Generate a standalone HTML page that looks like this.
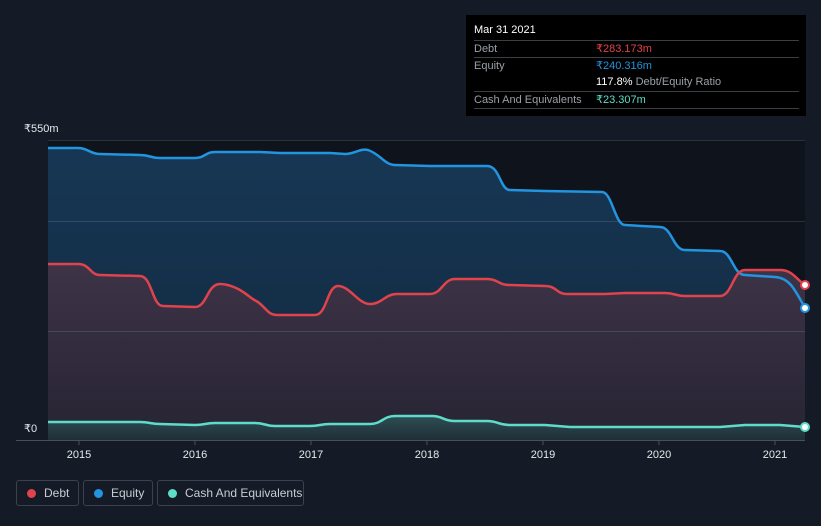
<!DOCTYPE html>
<html style="overflow:hidden"><head><meta charset="utf-8"><style>
body{margin:0;width:821px;height:526px;background:#151b26;font-family:"Liberation Sans",sans-serif;overflow:hidden;position:relative}
.tt{position:absolute;left:466px;top:15px;width:340px;height:101px;background:#000;color:#fff;font-size:11px}
.tt .r{position:absolute;left:8px;width:325px;border-top:1px solid #3a3f47;height:17px;line-height:17px;color:#9aa0a8}
.leg{position:absolute;top:480px;height:26px;border:1px solid #3c424c;border-radius:3px;color:#c8ccd2;font-size:12px;line-height:24px;box-sizing:border-box;white-space:nowrap;overflow:hidden}
.dot{display:inline-block;width:9px;height:9px;border-radius:50%;margin:0 8px 0 10px;vertical-align:-1px}
</style></head><body>
<svg width="821" height="526" style="position:absolute;left:0;top:0">
<defs>
<linearGradient id="ge" x1="0" y1="0" x2="0" y2="1"><stop offset="0" stop-color="#163754"/><stop offset="1" stop-color="#13283d"/></linearGradient>
<linearGradient id="gd" x1="0" y1="0" x2="0" y2="1"><stop offset="0" stop-color="#3e3347"/><stop offset="1" stop-color="#262433"/></linearGradient>
<linearGradient id="gc" x1="0" y1="0" x2="0" y2="1"><stop offset="0" stop-color="#2e4e55"/><stop offset="1" stop-color="#1f2e36"/></linearGradient>
</defs>
<rect x="48" y="140" width="757" height="300" fill="#0f141c"/>
<path d="M48,148 L78,148 C88,148 90,154 100,154 L140,155 C150,155 150,158 160,158 L195,158 C205,158 205,152 215,152 L260,152 L280,153 L330,153 L345,154 C355,154 360,148 368,150 C380,154 385,165 395,165 L430,166 L487,166 C500,166 500,190 510,190 L545,191 L602,192 C612,192 615,225 625,225 L660,227 C672,227 673,250 685,250 L720,251 C732,251 733,275 745,275 L775,277 C790,278 795,290 805,308 L805,440 L48,440Z" fill="url(#ge)"/>
<path d="M48,264 L78,264 C90,264 90,275 100,275 L140,276 C152,276 152,306 163,306 L195,307 C207,307 207,284 220,284 C230,284 240,290 240,290 C250,296 250,298 258,302 C268,310 268,315 278,315 L315,315 C327,315 327,286 338,286 C350,286 358,304 370,304 C382,304 385,294 397,294 L430,294 C442,294 443,279 455,279 L487,279 C498,279 498,285 510,285 L545,286 C557,286 556,294 567,294 L605,294 L625,293 L665,293 C675,293 675,296 685,296 L720,296 C732,296 733,270 745,270 L780,270 C792,270 795,278 805,285 L805,440 L48,440Z" fill="url(#gd)"/>
<path d="M48,422 L140,422 C150,422 150,424 160,424 L195,425 C205,425 205,423 215,423 L255,423 C265,423 265,426 275,426 L310,426 C320,426 320,424 330,424 L370,424 C382,424 383,416 395,416 L432,416 C443,416 443,421 455,421 L487,421 C498,421 498,425 510,425 L545,425 L570,427 L720,427 L745,425 L780,425 L805,427 L805,440 L48,440Z" fill="url(#gc)"/>
<line x1="48" y1="140.5" x2="805" y2="140.5" stroke="#ffffff" stroke-opacity="0.12"/>
<line x1="48" y1="221.5" x2="805" y2="221.5" stroke="#ffffff" stroke-opacity="0.12"/>
<line x1="48" y1="331.5" x2="805" y2="331.5" stroke="#ffffff" stroke-opacity="0.12"/>
<path d="M48,148 L78,148 C88,148 90,154 100,154 L140,155 C150,155 150,158 160,158 L195,158 C205,158 205,152 215,152 L260,152 L280,153 L330,153 L345,154 C355,154 360,148 368,150 C380,154 385,165 395,165 L430,166 L487,166 C500,166 500,190 510,190 L545,191 L602,192 C612,192 615,225 625,225 L660,227 C672,227 673,250 685,250 L720,251 C732,251 733,275 745,275 L775,277 C790,278 795,290 805,308" fill="none" stroke="#2394df" stroke-width="2.5"/>
<path d="M48,264 L78,264 C90,264 90,275 100,275 L140,276 C152,276 152,306 163,306 L195,307 C207,307 207,284 220,284 C230,284 240,290 240,290 C250,296 250,298 258,302 C268,310 268,315 278,315 L315,315 C327,315 327,286 338,286 C350,286 358,304 370,304 C382,304 385,294 397,294 L430,294 C442,294 443,279 455,279 L487,279 C498,279 498,285 510,285 L545,286 C557,286 556,294 567,294 L605,294 L625,293 L665,293 C675,293 675,296 685,296 L720,296 C732,296 733,270 745,270 L780,270 C792,270 795,278 805,285" fill="none" stroke="#e0434c" stroke-width="2.5"/>
<path d="M48,422 L140,422 C150,422 150,424 160,424 L195,425 C205,425 205,423 215,423 L255,423 C265,423 265,426 275,426 L310,426 C320,426 320,424 330,424 L370,424 C382,424 383,416 395,416 L432,416 C443,416 443,421 455,421 L487,421 C498,421 498,425 510,425 L545,425 L570,427 L720,427 L745,425 L780,425 L805,427" fill="none" stroke="#5fdcc9" stroke-width="2.5"/>
<line x1="16" y1="440.5" x2="805" y2="440.5" stroke="#4a505a"/>
<g stroke="#4a505a"><line x1="79" y1="440" x2="79" y2="445"/><line x1="195" y1="440" x2="195" y2="445"/><line x1="311" y1="440" x2="311" y2="445"/><line x1="427" y1="440" x2="427" y2="445"/><line x1="543" y1="440" x2="543" y2="445"/><line x1="659" y1="440" x2="659" y2="445"/><line x1="775" y1="440" x2="775" y2="445"/></g>
<circle cx="805" cy="285" r="4" fill="#fff" stroke="#e0434c" stroke-width="2"/>
<circle cx="805" cy="308" r="4" fill="#fff" stroke="#2394df" stroke-width="2"/>
<circle cx="805" cy="427" r="4" fill="#fff" stroke="#5fdcc9" stroke-width="2"/>
<g fill="#e6e8eb" font-size="11" font-family="Liberation Sans,sans-serif">
<text x="24" y="132">₹550m</text><text x="24" y="432">₹0</text>
<g text-anchor="middle"><text x="79" y="458">2015</text><text x="195" y="458">2016</text><text x="311" y="458">2017</text><text x="427" y="458">2018</text><text x="543" y="458">2019</text><text x="659" y="458">2020</text><text x="775" y="458">2021</text></g>
</g>
</svg>
<div class="tt">
<div style="position:absolute;left:8px;top:9px;font-size:11px">Mar 31 2021</div>
<div class="r" style="top:25px">Debt<span style="position:absolute;left:122px;color:#e0434c">₹283.173m</span></div>
<div class="r" style="top:42px">Equity<span style="position:absolute;left:122px;color:#2394df">₹240.316m</span></div>
<div style="position:absolute;left:130px;top:59px;line-height:17px;color:#fff">117.8% <span style="color:#9aa0a8">Debt/Equity Ratio</span></div>
<div class="r" style="top:76px">Cash And Equivalents<span style="position:absolute;left:122px;color:#5fdcc9">₹23.307m</span></div>
<div class="r" style="top:93px;height:0"></div>
</div>
<div class="leg" style="left:16px;width:63px"><span class="dot" style="background:#e0434c"></span>Debt</div>
<div class="leg" style="left:83px;width:70px"><span class="dot" style="background:#2394df"></span>Equity</div>
<div class="leg" style="left:157px;width:147px"><span class="dot" style="background:#5fdcc9"></span>Cash And Equivalents</div>
</body></html>
